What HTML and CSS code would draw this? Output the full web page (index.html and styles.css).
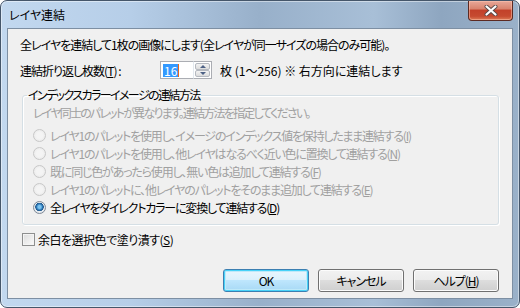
FILE: index.html
```html
<!DOCTYPE html>
<html lang="ja">
<head>
  <meta charset="UTF-8">
  <title>レイヤ連結</title>
  <link rel="stylesheet" href="styles.css">
</head>
<body>
  <div class="window">
    <!-- Title bar -->
    <div class="titlebar">
      <span class="title">レイヤ連結</span>
      <button class="close" title="閉じる">
        <svg width="14" height="11" viewBox="0 0 14 11">
          <path d="M2.5 1.5 L11.5 9.5 M11.5 1.5 L2.5 9.5" stroke="#5a4a48" stroke-width="4" stroke-linecap="round"/>
          <path d="M2.5 1.5 L11.5 9.5 M11.5 1.5 L2.5 9.5" stroke="#ffffff" stroke-width="2.2" stroke-linecap="round"/>
        </svg>
      </button>
    </div>

    <div class="client">
      <p class="intro">全レイヤを連結して1枚の画像にします(全レイヤが同一サイズの場合のみ可能)。</p>

      <div class="row">
        <span class="row-label">連結折り返し枚数(<u>T</u>) :</span>
        <div class="spin">
          <span class="spin-edit"><span class="sel">16</span><span class="caret"></span></span>
          <span class="spin-buttons">
            <span class="spin-btn"><i class="arrow up"></i></span>
            <span class="spin-btn"><i class="arrow down"></i></span>
          </span>
        </div>
        <span class="suffix">枚 (1～256) ※ 右方向に連結します</span>
      </div>

      <fieldset class="group">
        <legend>インデックスカラーイメージの連結方法</legend>
        <p class="hint">レイヤ同士のパレットが異なります。連結方法を指定してください。</p>
        <label class="radio disabled"><span class="dot"></span>レイヤ1のパレットを使用し、イメージのインデックス値を保持したまま連結する(<u>I</u>)</label>
        <label class="radio disabled"><span class="dot"></span>レイヤ1のパレットを使用し、他レイヤはなるべく近い色に置換して連結する(<u>N</u>)</label>
        <label class="radio disabled"><span class="dot"></span>既に同じ色があったら使用し、無い色は追加して連結する(<u>F</u>)</label>
        <label class="radio disabled"><span class="dot"></span>レイヤ1のパレットに、他レイヤのパレットをそのまま追加して連結する(<u>E</u>)</label>
        <label class="radio checked"><span class="dot"></span>全レイヤをダイレクトカラーに変換して連結する(<u>D</u>)</label>
      </fieldset>

      <label class="check"><span class="box"></span>余白を選択色で塗り潰す(<u>S</u>)</label>

      <div class="buttons">
        <button class="btn default">OK</button>
        <button class="btn">キャンセル</button>
        <button class="btn">ヘルプ(<u>H</u>)</button>
      </div>
    </div>
  </div>
</body>
</html>
```

FILE: styles.css
```css
body {
  margin: 0;
  background: #ffffff;
  font-family: "Noto Sans CJK JP", sans-serif;
  font-size: 12px;
  font-feature-settings: "palt";
  letter-spacing: -1px;
  color: #000;
}

.window {
  width: 520px;
  height: 308px;
  box-sizing: border-box;
  border: 1px solid #45566a;
  border-radius: 7px;
  background: linear-gradient(to right, #c2d8ef 0%, #b6cee8 25%, #98b0ca 50%, #a8bfd7 72%, #8ea6c0 85%, #9ab1c9 100%);
  box-shadow: inset 0 0 0 1px rgba(255, 255, 255, 0.45);
  overflow: hidden;
}

.titlebar {
  height: 27px;
  display: flex;
  align-items: flex-start;
  padding-left: 8px;
}

.title {
  margin-top: 6px;
  line-height: 16px;
  letter-spacing: 0;
  color: #000;
}

.close {
  margin-left: auto;
  margin-right: 6px;
  width: 45px;
  height: 20px;
  padding: 0;
  border: 1px solid #5c2a22;
  border-top: none;
  border-radius: 0 0 4px 4px;
  background: linear-gradient(to bottom, #e8a899 0%, #d9846f 40%, #c2412a 50%, #c64a30 80%, #dc7a55 100%);
  box-shadow: inset 0 0 0 1px rgba(255, 200, 180, 0.5);
  display: flex;
  align-items: center;
  justify-content: center;
}

.client {
  margin: 0 6px;
  height: 271px;
  box-sizing: border-box;
  border: 1px solid #7d8fa3;
  background: #f0f0f0;
  padding: 8px 13px 0 12px;
}

.intro {
  margin: 0;
  line-height: 16px;
}

.row {
  display: flex;
  align-items: center;
  height: 18px;
  margin-top: 8px;
}

.row-label {
  width: 140px;
}

.spin {
  display: flex;
  height: 18px;
}

.spin-edit {
  width: 33px;
  box-sizing: border-box;
  border: 1px solid #abadb3;
  border-right: none;
  background: #fff;
  display: flex;
  align-items: center;
  padding-left: 2px;
}

.sel {
  background: #3399ff;
  color: #fff;
  line-height: 13px;
  padding: 0 1px;
  letter-spacing: 0;
}

.caret {
  width: 1px;
  height: 13px;
  background: #e8661a;
}

.spin-buttons {
  width: 19px;
  box-sizing: border-box;
  border: 1px solid #abadb3;
  border-left: 1px solid #e3e9ef;
  background: #fff;
  display: flex;
  flex-direction: column;
  padding: 1px;
}

.spin-btn {
  flex: 1;
  border: 1px solid #b5b9c0;
  border-radius: 2px;
  background: linear-gradient(to bottom, #f3f3f3, #dcdcdc);
  display: flex;
  align-items: center;
  justify-content: center;
}

.arrow {
  width: 0;
  height: 0;
  border-left: 3px solid transparent;
  border-right: 3px solid transparent;
}

.arrow.up {
  border-bottom: 3px solid #4d6185;
}

.arrow.down {
  border-top: 3px solid #4d6185;
}

.suffix {
  margin-left: 8px;
  white-space: pre;
  letter-spacing: 0;
}

.group {
  margin: 8px 0 0 2px;
  width: 477px;
  box-sizing: border-box;
  border: 1px solid #d5dfe5;
  border-radius: 3px;
  box-shadow: inset 1px 1px 0 #fff, 1px 1px 0 #fff;
  padding: 2px 10px 8px 10px;
}

.group legend {
  padding: 0 1px;
  margin-left: -6px;
  line-height: 16px;
  letter-spacing: -1.6px;
}

.hint {
  margin: 0 0 5px;
  line-height: 16px;
  color: #a0a0a0;
  letter-spacing: -1.8px;
}

.radio {
  display: flex;
  align-items: center;
  height: 18px;
  white-space: nowrap;
  letter-spacing: -1.2px;
}

.radio.disabled {
  color: #a0a0a0;
}

.dot {
  width: 13px;
  height: 13px;
  box-sizing: border-box;
  border-radius: 50%;
  margin-right: 4px;
  border: 1px solid #c8c8c8;
  background: radial-gradient(circle at 50% 50%, #f4f4f4 0 40%, #e4e4e4 100%);
}

.radio.checked .dot {
  border: 1px solid #7f8a97;
  background: radial-gradient(circle at 50% 45%, #7cc4f0 0 1.5px, #2a78b8 3px, #24598a 4px, #e8edf2 4.5px, #d8dde3 100%);
}

.check {
  display: flex;
  align-items: center;
  height: 18px;
  margin: 5px 0 0 2px;
  letter-spacing: -0.5px;
}

.box {
  width: 13px;
  height: 13px;
  box-sizing: border-box;
  border: 1px solid #8e8f8f;
  background: linear-gradient(135deg, #dcdcdc, #fbfbfb);
  box-shadow: inset 0 0 0 1px #f4f4f4;
  margin-right: 3px;
}

.buttons {
  display: flex;
  justify-content: flex-end;
  gap: 9px;
  margin-top: 21px;
}

.btn {
  width: 86px;
  height: 23px;
  padding: 0;
  font-family: inherit;
  font-size: 12px;
  font-feature-settings: "palt";
  letter-spacing: -1px;
  color: #000;
  border: 1px solid #707070;
  border-radius: 3px;
  background: linear-gradient(to bottom, #f2f2f2 0%, #ebebeb 50%, #dddddd 50%, #cfcfcf 100%);
  box-shadow: inset 0 0 0 1px #fcfcfc;
}

.btn.default {
  border-color: #3c7fb1;
  box-shadow: inset 0 0 0 1px #48d2f8, inset 0 0 0 2px #bfe9f9;
  background: linear-gradient(to bottom, #eaf6fd 0%, #d9f0fc 50%, #bee6fd 50%, #a7d9f5 100%);
}
```
